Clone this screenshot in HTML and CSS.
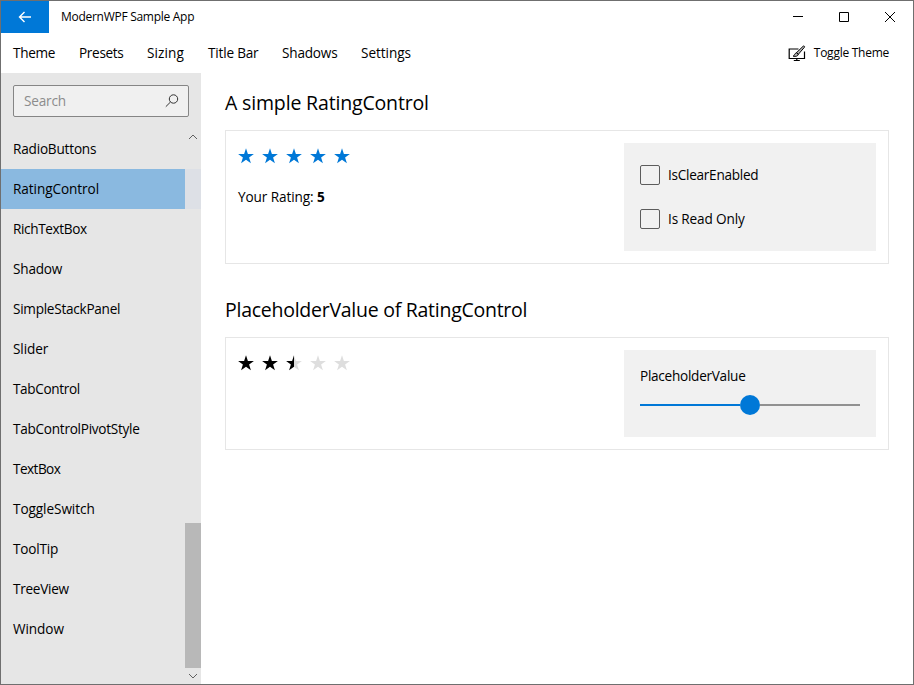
FILE: index.html
```html
<!DOCTYPE html>
<html lang="en">
<head>
<meta charset="utf-8">
<title>ModernWPF Sample App</title>
<link rel="stylesheet" href="styles.css">
</head>
<body>
<svg class="defs" width="0" height="0">
  <defs>
    <symbol id="star" viewBox="0 0 16 16"><path d="M8 .3 9.9 5.9H15.9L11.1 9.500 12.9 15.3 8 11.8 3.1 15.3 4.9 9.500.1 5.9H6.1Z"/></symbol>
    <linearGradient id="half"><stop offset=".5" stop-color="#000"/><stop offset=".5" stop-color="#dedede"/></linearGradient>
  </defs>
</svg>
<div class="window">
  <header class="titlebar">
    <button class="back" aria-label="Back"><svg width="14" height="12" viewBox="0 0 14 12"><path d="M13 6H1.500M6.500 1 1.500 6l5 5"/></svg></button>
    <span class="title">ModernWPF Sample App</span>
    <div class="caption">
      <svg width="46" height="32" viewBox="0 0 46 32"><path d="M18 15.500h10"/></svg>
      <svg width="46" height="32" viewBox="0 0 46 32"><path d="M18.500 11.500h9v9h-9z"/></svg>
      <svg width="46" height="32" viewBox="0 0 46 32"><path d="M18 11l10 10M28 11 18 21"/></svg>
    </div>
  </header>
  <nav class="menu">
    <span class="m1">Theme</span><span class="m2">Presets</span><span class="m3">Sizing</span><span class="m4">Title Bar</span><span class="m5">Shadows</span><span class="m6">Settings</span>
    <div class="toggle">
      <svg width="18" height="17" viewBox="0 0 18 17"><path d="M10.500 4H1.200v9.500h15.300V6.500M8.800 13.500v2M5.800 15.500h6" stroke-width="1.2"/><path d="M15.200 1.200c.8-.6 1.800.3 1.200 1.100L10.300 9.300 8.500 7.700ZM8.500 7.700l1.800 1.600c-.4 2-2.500 2.300-5.100 1.900 1.300-.5 1.300-2.800 3.300-3.500Z" fill="#bbb"/></svg>
      <span>Toggle Theme</span>
    </div>
  </nav>
  <div class="body">
    <aside class="sidebar">
      <div class="search"><span>Search</span><svg width="14" height="14" viewBox="0 0 14 14"><circle cx="8.500" cy="5" r="4.200"/><path d="M5.500 8 .8 12.700"/></svg></div>
      <div class="listwrap">
        <ul class="list">
          <li>RadioButtons</li>
          <li class="selected wide">RatingControl</li>
          <li class="tight">RichTextBox</li>
          <li>Shadow</li>
          <li class="snug">SimpleStackPanel</li>
          <li class="wide">Slider</li>
          <li class="tight">TabControl</li>
          <li class="snug">TabControlPivotStyle</li>
          <li class="tighter">TextBox</li>
          <li class="wide">ToggleSwitch</li>
          <li>ToolTip</li>
          <li class="snug">TreeView</li>
          <li class="wide">Window</li>
        </ul>
        <div class="scrollbar">
          <svg width="16" height="16" viewBox="0 0 16 16"><path d="M4 10l4-4 4 4"/></svg>
          <div class="marker"></div>
          <div class="thumb"></div>
          <svg width="16" height="16" viewBox="0 0 16 16"><path d="M4 6l4 4 4-4"/></svg>
        </div>
      </div>
    </aside>
    <main class="content">
      <h2>A simple RatingControl</h2>
      <section class="card first">
        <div class="demo">
          <div class="stars blue"><svg><use href="#star"/></svg><svg><use href="#star"/></svg><svg><use href="#star"/></svg><svg><use href="#star"/></svg><svg><use href="#star"/></svg></div>
          <p class="rating">Your Rating: <b>5</b></p>
        </div>
        <div class="options">
          <label><i class="box"></i><span class="snug">IsClearEnabled</span></label>
          <label><i class="box"></i><span class="read">Is Read Only</span></label>
        </div>
      </section>
      <h2 class="long">PlaceholderValue of RatingControl</h2>
      <section class="card second">
        <div class="demo">
          <div class="stars"><svg><use href="#star"/></svg><svg><use href="#star"/></svg><svg class="half"><use href="#star"/></svg><svg class="off"><use href="#star"/></svg><svg class="off"><use href="#star"/></svg></div>
        </div>
        <div class="options">
          <span class="snug">PlaceholderValue</span>
          <div class="slider"><div class="fill"></div><div class="knob"></div><div class="rest"></div></div>
        </div>
      </section>
    </main>
  </div>
</div>
</body>
</html>
```
FILE: styles.css
```css
* { box-sizing: border-box; }
body {
  margin: 0;
  font: 13.6px/20px "Open Sans", "Noto Sans", sans-serif;
  letter-spacing: -0.2px;
  color: #000;
}
.defs { position: absolute; }
.window {
  width: 914px;
  height: 685px;
  border: 1px solid #6f6f6f;
  background: #fff;
  display: flex;
  flex-direction: column;
  overflow: hidden;
  white-space: nowrap;
}
svg { fill: none; stroke: #000; display: block; flex: none; }
.wide { letter-spacing: -0.08px; }
.read { letter-spacing: -0.15px; }
.snug { letter-spacing: -0.27px; }
.tight { letter-spacing: -0.37px; }
.tighter { letter-spacing: -0.55px; }
.titlebar { height: 32px; display: flex; align-items: center; }
.back {
  width: 48px;
  height: 32px;
  border: 0;
  padding: 0;
  background: #0078d7;
  display: flex;
  align-items: center;
  justify-content: center;
}
.back svg { stroke: #fff; stroke-width: 1.4; }
.title { margin-left: 12px; font-size: 12px; letter-spacing: -0.28px; }
.caption { margin-left: auto; display: flex; }
.menu { height: 40px; display: flex; align-items: center; padding: 0 24px 0 12px; gap: 24px; }
.m1 { width: 42px; letter-spacing: -0.3px; }
.m2 { width: 44px; letter-spacing: -0.33px; }
.m3 { width: 37px; letter-spacing: 0.1px; }
.m4 { width: 50px; }
.m5 { width: 55px; }
.m6 { width: 50px; letter-spacing: -0.05px; }
.toggle { margin-left: auto; display: flex; align-items: center; gap: 8px; font-size: 12px; letter-spacing: -0.26px; }
.body { flex: 1; display: flex; min-height: 0; }
.sidebar { width: 200px; background: #e6e6e6; display: flex; flex-direction: column; }
.search {
  margin: 12px 12px 0;
  height: 32px;
  flex: none;
  border: 1px solid #858585;
  border-radius: 2px;
  background: #f0f0f0;
  color: #8c8c8c;
  display: flex;
  align-items: center;
  justify-content: space-between;
  padding: 0 9px 0 10px;
}
.search svg { stroke: #333; }
.listwrap { flex: 1; margin-top: 12px; display: flex; min-height: 0; }
.list { list-style: none; margin: 0; padding: 0; flex: 1; }
.list li { height: 40px; line-height: 40px; padding-left: 12px; }
.list .selected { background: #8ab9e0; }
.scrollbar { width: 16px; display: flex; flex-direction: column; }
.scrollbar svg { stroke: #606060; }
.marker { margin-top: 24px; height: 40px; background: #dde0e6; }
.thumb { margin-top: auto; height: 145px; background: #b8b8b8; }
.content { flex: 1; padding: 16px 24px; }
h2 { margin: 0; font-size: 19.5px; line-height: 28px; font-weight: 400; letter-spacing: -0.16px; }
.long { letter-spacing: -0.26px; }
.card { margin-top: 13px; border: 1px solid #e6e6e6; padding: 12px; display: flex; justify-content: space-between; }
.first { height: 134px; margin-bottom: 32px; }
.second { height: 113px; }
.stars { display: flex; gap: 8px; margin-top: 5px; }
.stars svg { width: 16px; height: 16px; fill: #000; stroke: none; }
.stars.blue svg { fill: #0078d7; }
.stars .half { fill: url(#half); }
.stars .off { fill: #dedede; }
.rating { margin: 23px 0 0; letter-spacing: -0.1px; }
.options { width: 252px; background: #f1f1f1; padding: 16px; }
.options label { display: flex; align-items: center; height: 32px; gap: 8px; margin-bottom: 12px; }
.box { width: 20px; height: 20px; border: 1px solid #5c5c5c; border-radius: 2px; }
.slider { display: flex; align-items: center; height: 20px; margin-top: 9px; }
.fill { height: 2px; flex: 1; background: #0078d7; }
.knob { width: 20px; height: 20px; border-radius: 50%; background: #0078d7; }
.rest { height: 2px; flex: 1; background: #919191; }
```
